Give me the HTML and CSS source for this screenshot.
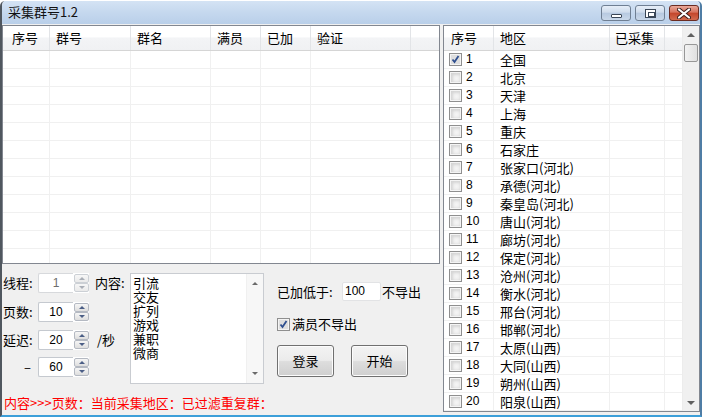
FILE: index.html
```html
<!DOCTYPE html>
<html>
<head>
<meta charset="utf-8">
<link rel="stylesheet" href="styles.css">
</head>
<body>
<div class="window">
  <div class="titlebar">
    <span class="title">采集群号1.2</span>
    <div class="caption-btns">
      <div class="cbtn min"><span class="min-ico"></span></div>
      <div class="cbtn max"><span class="max-ico"></span></div>
      <div class="cbtn close">
        <svg width="14" height="11" viewBox="0 0 14 11"><path d="M2 1.5 L12 9.5 M12 1.5 L2 9.5" stroke="#3b1d1a" stroke-width="4" stroke-linecap="round"/><path d="M2 1.5 L12 9.5 M12 1.5 L2 9.5" stroke="#ffffff" stroke-width="2.2" stroke-linecap="round"/></svg>
      </div>
    </div>
  </div>
  <div class="client">
    <div class="left">
      <div class="ltable">
        <div class="lrow lhead">
          <div class="c1">序号</div><div class="c2">群号</div><div class="c3">群名</div><div class="c4">满员</div><div class="c5">已加</div><div class="c6">验证</div><div class="c7"></div>
        </div>
        <div class="lrow"><div class="c1"></div><div class="c2"></div><div class="c3"></div><div class="c4"></div><div class="c5"></div><div class="c6"></div><div class="c7"></div></div>
        <div class="lrow"><div class="c1"></div><div class="c2"></div><div class="c3"></div><div class="c4"></div><div class="c5"></div><div class="c6"></div><div class="c7"></div></div>
        <div class="lrow"><div class="c1"></div><div class="c2"></div><div class="c3"></div><div class="c4"></div><div class="c5"></div><div class="c6"></div><div class="c7"></div></div>
        <div class="lrow"><div class="c1"></div><div class="c2"></div><div class="c3"></div><div class="c4"></div><div class="c5"></div><div class="c6"></div><div class="c7"></div></div>
        <div class="lrow"><div class="c1"></div><div class="c2"></div><div class="c3"></div><div class="c4"></div><div class="c5"></div><div class="c6"></div><div class="c7"></div></div>
        <div class="lrow"><div class="c1"></div><div class="c2"></div><div class="c3"></div><div class="c4"></div><div class="c5"></div><div class="c6"></div><div class="c7"></div></div>
        <div class="lrow"><div class="c1"></div><div class="c2"></div><div class="c3"></div><div class="c4"></div><div class="c5"></div><div class="c6"></div><div class="c7"></div></div>
        <div class="lrow"><div class="c1"></div><div class="c2"></div><div class="c3"></div><div class="c4"></div><div class="c5"></div><div class="c6"></div><div class="c7"></div></div>
        <div class="lrow"><div class="c1"></div><div class="c2"></div><div class="c3"></div><div class="c4"></div><div class="c5"></div><div class="c6"></div><div class="c7"></div></div>
        <div class="lrow"><div class="c1"></div><div class="c2"></div><div class="c3"></div><div class="c4"></div><div class="c5"></div><div class="c6"></div><div class="c7"></div></div>
        <div class="lrow"><div class="c1"></div><div class="c2"></div><div class="c3"></div><div class="c4"></div><div class="c5"></div><div class="c6"></div><div class="c7"></div></div>
        <div class="lrow"><div class="c1"></div><div class="c2"></div><div class="c3"></div><div class="c4"></div><div class="c5"></div><div class="c6"></div><div class="c7"></div></div>
      </div>

      <div class="bottom">
        <div class="controls">
          <div class="form-grid">
            <div class="lbl r1">线程:</div>
            <div class="spin disabled r1 s">
              <div class="spin-input">1</div>
              <div class="spin-btns"><div class="sb"><span class="up"></span></div><div class="sb"><span class="dn"></span></div></div>
            </div>
            <div class="lbl content-lbl r1">内容:</div>
            <div class="memo">
              <div class="memo-text"><div>引流</div><div>交友</div><div>扩列</div><div>游戏</div><div>兼职</div><div>微商</div></div>
              <div class="memo-scroll"><span class="up"></span><span class="dn"></span></div>
            </div>

            <div class="lbl r2">页数:</div>
            <div class="spin r2 s">
              <div class="spin-input">10</div>
              <div class="spin-btns"><div class="sb"><span class="up"></span></div><div class="sb"><span class="dn"></span></div></div>
            </div>

            <div class="lbl r3">延迟:</div>
            <div class="spin r3 s">
              <div class="spin-input">20</div>
              <div class="spin-btns"><div class="sb"><span class="up"></span></div><div class="sb"><span class="dn"></span></div></div>
            </div>
            <div class="lbl per r3">/秒</div>

            <div class="lbl dash r4">–</div>
            <div class="spin r4 s">
              <div class="spin-input">60</div>
              <div class="spin-btns"><div class="sb"><span class="up"></span></div><div class="sb"><span class="dn"></span></div></div>
            </div>
          </div>

          <div class="opts">
            <div class="opt-row">
              <span class="lbl low-lbl">已加低于:</span>
              <div class="num-input">100</div>
              <span class="lbl">不导出</span>
            </div>
            <div class="opt-row check-row">
              <svg class="cb" width="13" height="13" viewBox="0 0 13 13"><rect x="0.5" y="0.5" width="12" height="12" fill="#f4f4f4" stroke="#8f8f8f"/><rect x="2" y="2" width="9" height="9" fill="#dedede"/><path d="M3.5 6.5 L5.5 9 L9.5 3" stroke="#2f4f8f" stroke-width="1.8" fill="none"/></svg>
              <span class="lbl">满员不导出</span>
            </div>
            <div class="opt-row btn-row">
              <div class="btn">登录</div>
              <div class="btn">开始</div>
            </div>
          </div>
        </div>
        <div class="status">内容&gt;&gt;&gt;页数：当前采集地区：已过滤重复群：</div>
      </div>
    </div>

    <div class="right">
      <div class="rtable">
        <div class="rrow rhead"><div class="d1">序号</div><div class="d2">地区</div><div class="d3">已采集</div><div class="d4"></div></div>
        <div class="rrow"><div class="d1"><svg class="cb" width="13" height="13" viewBox="0 0 13 13"><rect x="0.5" y="0.5" width="12" height="12" fill="#f4f4f4" stroke="#8f8f8f"/><rect x="2" y="2" width="9" height="9" fill="#dedede"/><path d="M3.5 6.5 L5.5 9 L9.5 3" stroke="#2f4f8f" stroke-width="1.8" fill="none"/></svg><span class="num">1</span></div><div class="d2">全国</div><div class="d3"></div><div class="d4"></div></div>
        <div class="rrow"><div class="d1"><span class="box"></span><span class="num">2</span></div><div class="d2">北京</div><div class="d3"></div><div class="d4"></div></div>
        <div class="rrow"><div class="d1"><span class="box"></span><span class="num">3</span></div><div class="d2">天津</div><div class="d3"></div><div class="d4"></div></div>
        <div class="rrow"><div class="d1"><span class="box"></span><span class="num">4</span></div><div class="d2">上海</div><div class="d3"></div><div class="d4"></div></div>
        <div class="rrow"><div class="d1"><span class="box"></span><span class="num">5</span></div><div class="d2">重庆</div><div class="d3"></div><div class="d4"></div></div>
        <div class="rrow"><div class="d1"><span class="box"></span><span class="num">6</span></div><div class="d2">石家庄</div><div class="d3"></div><div class="d4"></div></div>
        <div class="rrow"><div class="d1"><span class="box"></span><span class="num">7</span></div><div class="d2">张家口(河北)</div><div class="d3"></div><div class="d4"></div></div>
        <div class="rrow"><div class="d1"><span class="box"></span><span class="num">8</span></div><div class="d2">承德(河北)</div><div class="d3"></div><div class="d4"></div></div>
        <div class="rrow"><div class="d1"><span class="box"></span><span class="num">9</span></div><div class="d2">秦皇岛(河北)</div><div class="d3"></div><div class="d4"></div></div>
        <div class="rrow"><div class="d1"><span class="box"></span><span class="num">10</span></div><div class="d2">唐山(河北)</div><div class="d3"></div><div class="d4"></div></div>
        <div class="rrow"><div class="d1"><span class="box"></span><span class="num">11</span></div><div class="d2">廊坊(河北)</div><div class="d3"></div><div class="d4"></div></div>
        <div class="rrow"><div class="d1"><span class="box"></span><span class="num">12</span></div><div class="d2">保定(河北)</div><div class="d3"></div><div class="d4"></div></div>
        <div class="rrow"><div class="d1"><span class="box"></span><span class="num">13</span></div><div class="d2">沧州(河北)</div><div class="d3"></div><div class="d4"></div></div>
        <div class="rrow"><div class="d1"><span class="box"></span><span class="num">14</span></div><div class="d2">衡水(河北)</div><div class="d3"></div><div class="d4"></div></div>
        <div class="rrow"><div class="d1"><span class="box"></span><span class="num">15</span></div><div class="d2">邢台(河北)</div><div class="d3"></div><div class="d4"></div></div>
        <div class="rrow"><div class="d1"><span class="box"></span><span class="num">16</span></div><div class="d2">邯郸(河北)</div><div class="d3"></div><div class="d4"></div></div>
        <div class="rrow"><div class="d1"><span class="box"></span><span class="num">17</span></div><div class="d2">太原(山西)</div><div class="d3"></div><div class="d4"></div></div>
        <div class="rrow"><div class="d1"><span class="box"></span><span class="num">18</span></div><div class="d2">大同(山西)</div><div class="d3"></div><div class="d4"></div></div>
        <div class="rrow"><div class="d1"><span class="box"></span><span class="num">19</span></div><div class="d2">朔州(山西)</div><div class="d3"></div><div class="d4"></div></div>
        <div class="rrow"><div class="d1"><span class="box"></span><span class="num">20</span></div><div class="d2">阳泉(山西)</div><div class="d3"></div><div class="d4"></div></div>
      </div>
      <div class="vscroll">
        <div class="arrow"><span class="up"></span></div>
        <div class="thumb"></div>
        <div class="track"></div>
        <div class="arrow"><span class="dn"></span></div>
      </div>
    </div>
  </div>
</div>
</body>
</html>
```

FILE: styles.css
```css
* { box-sizing: border-box; }
html, body { margin: 0; padding: 0; background: #ffffff; }
body {
  width: 704px; height: 418px; overflow: hidden;
  padding-top: 1px;
  font-family: "Noto Sans CJK SC", "Noto Sans", sans-serif;
  font-size: 13px; color: #000;
}
.window {
  width: 702px; height: 416px;
  border-left: 2px solid #50575f;
  border-right: 2px solid #4f7da5;
  border-bottom: 2px solid #3c9fd9;
  border-radius: 5px 5px 0 0;
  background: #f0f0f0;
  display: flex; flex-direction: column;
  overflow: hidden;
}
.titlebar {
  height: 23px; flex: none;
  background: linear-gradient(#d4e3f4 0%, #c5d8ee 50%, #b9cfe9 100%);
  display: flex; align-items: flex-start; justify-content: space-between;
}
.title { padding-left: 6px; line-height: 22px; font-size: 13px; color: #111; }
.caption-btns { display: flex; gap: 4px; padding-top: 4px; padding-right: 1px; }
.cbtn {
  width: 30px; height: 16px; border: 1px solid #6f7f93; border-radius: 3px;
  display: flex; align-items: center; justify-content: center;
  background: linear-gradient(#e6eef8 0%, #cfdcec 45%, #b7c9e0 50%, #c9d8ea 100%);
}
.cbtn.close {
  border-color: #6b2c22;
  background: linear-gradient(#e9a99a 0%, #d7725d 45%, #c4452b 50%, #d26b4f 100%);
}
.min-ico { width: 11px; height: 4px; margin-top: 5px; background: #fff; border: 1px solid #3a4656; border-radius: 1px; }
.max-ico { width: 11px; height: 9px; border: 1px solid #3a4656; background: #fff; }
.max-ico::after { content: ""; display: block; margin: 2px; width: 5px; height: 3px; border: 1px solid #3a4656; }

.client { flex: 1; display: flex; gap: 3px; padding-top: 1px; }
.left { width: 438px; display: flex; flex-direction: column; }

.ltable {
  height: 239px; border: 1px solid #828790; background: #fff; overflow: hidden;
}
.lrow { display: flex; height: 18px; border-bottom: 1px solid #f0f0f0; }
.lrow > div { border-right: 1px solid #f0f0f0; height: 100%; }
.lrow.lhead {
  height: 25px; border-bottom: 1px solid #d5d5d5;
  background: linear-gradient(#ffffff 0%, #ffffff 45%, #f3f4f6 50%, #f0f1f3 100%);
}
.lhead > div { border-right: 1px solid #e2e4e7; padding-left: 6px; line-height: 24px; }
.lrow .c1 { width: 47px; }
.lrow .c2 { width: 81px; }
.lrow .c3 { width: 80px; }
.lrow .c4 { width: 50px; }
.lrow .c5 { width: 50px; }
.lrow .c6 { width: 100px; }
.lrow .c7 { width: 28px; border-right: none; }
.lhead .c1 { padding-left: 9px; }

.bottom { flex: 1; display: flex; flex-direction: column; }
.controls { display: flex; padding-top: 9px; height: 130px; }
.form-grid {
  display: grid;
  grid-template-columns: 36px 51px 41px 134px;
  grid-template-rows: 29px 28px 27px 20px;
  align-items: start;
}
.lbl { font-size: 13px; line-height: 20px; white-space: nowrap; }
.r1 { grid-row: 1; }
.r2 { grid-row: 2; }
.r3 { grid-row: 3; }
.r4 { grid-row: 4; }
.form-grid .lbl { grid-column: 1; padding-left: 1px; }
.form-grid .s { grid-column: 2; }
.form-grid .content-lbl { grid-column: 3; padding-left: 6px; }
.form-grid .per { grid-column: 3; padding-left: 8px; }
.form-grid .dash { padding-left: 22px; }
.spin { display: flex; height: 20px; }
.spin-input {
  width: 35px; height: 20px; background: #fff;
  border: 1px solid #c5c9cf; border-right: none; border-radius: 2px 0 0 2px;
  font-family: "Liberation Sans", sans-serif; font-size: 12px; line-height: 18px;
  text-align: center;
}
.spin-btns { width: 16px; height: 20px; display: flex; flex-direction: column; background: #fff; padding: 1px 0 1px 1px; }
.sb {
  flex: 1; border: 1px solid #b4b9c2; border-radius: 2px;
  background: linear-gradient(#f6f6f6, #dedede);
  display: flex; align-items: center; justify-content: center;
}
.up { width: 0; height: 0; border-left: 3px solid transparent; border-right: 3px solid transparent; border-bottom: 3px solid #4b5e86; }
.dn { width: 0; height: 0; border-left: 3px solid transparent; border-right: 3px solid transparent; border-top: 3px solid #4b5e86; }
.disabled .spin-input { color: #6d6d6d; border-color: #d7d9dc; }
.disabled .sb { border-color: #ccd0d5; background: linear-gradient(#f7f7f7, #eaeaea); }
.disabled .up { border-bottom-color: #a9aeb6; }
.disabled .dn { border-top-color: #a9aeb6; }

.memo {
  grid-column: 4; grid-row: 1 / 5;
  height: 111px; width: 134px;
  background: #fff; border: 1px solid #c9ccd1;
  display: flex;
}
.memo-text { flex: 1; padding: 2px 0 0 2px; font-size: 13px; line-height: 14px; }
.memo-text > div { height: 14px; }
.memo-scroll {
  width: 17px; background: #f7f7f7; border-left: 1px solid #f0f0f0;
  display: flex; flex-direction: column; justify-content: space-between; align-items: center;
  padding: 8px 0 8px;
}
.memo-scroll .up { border-bottom-color: #6a6a6a; }
.memo-scroll .dn { border-top-color: #6a6a6a; }

.opts { margin-left: 13px; display: flex; flex-direction: column; }
.opt-row { display: flex; align-items: center; }
.opt-row:first-child { margin-top: 9px; height: 19px; }
.low-lbl { width: 64px; }
.num-input {
  width: 39px; height: 19px; background: #fff; border: 1px solid #e2e3e5; border-radius: 2px;
  margin-left: 1px; margin-right: 1px;
  font-family: "Liberation Sans", sans-serif; font-size: 12px; line-height: 17px; padding-left: 2px;
}
.check-row { margin-top: 16px; height: 14px; gap: 2px; }
.btn-row { margin-top: 14px; gap: 17px; }
.btn {
  width: 57px; height: 32px; border: 1px solid #707070; border-radius: 3px;
  background: linear-gradient(#f3f3f3 0%, #ebebeb 48%, #dddddd 52%, #cfcfcf 100%);
  box-shadow: inset 0 0 0 1px #fcfcfc;
  text-align: center; line-height: 30px; font-size: 13px;
}

.status { color: #ff0000; font-size: 13px; line-height: 16px; padding-left: 2px; margin-top: 1px; }

.right { width: 257px; height: 387px; border: 1px solid #828790; background: #fff; display: flex; }
.rtable { flex: 1; }
.rrow { display: flex; height: 18px; border-bottom: 1px solid #f0f0f0; }
.rrow > div { border-right: 1px solid #f0f0f0; height: 100%; }
.rrow.rhead {
  height: 25px; border-bottom: 1px solid #d5d5d5;
  background: linear-gradient(#ffffff 0%, #ffffff 45%, #f3f4f6 50%, #f0f1f3 100%);
}
.rhead > div { border-right: 1px solid #e2e4e7; line-height: 24px; }
.rrow .d1 { width: 50px; display: flex; align-items: center; padding-left: 5px; }
.rrow .d2 { width: 116px; padding-left: 6px; line-height: 17px; }
.rrow .d3 { width: 55px; padding-left: 5px; }
.rrow .d4 { width: 17px; border-right: none; }
.rhead .d1 { padding-left: 7px; }
.rhead .d2 { line-height: 24px; }
.cb { flex: none; display: block; }
.box {
  width: 13px; height: 13px; flex: none; border: 1px solid #8f8f8f;
  background: #f4f4f4; box-shadow: inset 0 0 0 1px #f4f4f4, inset 1px 1px 3px 2px #d4d4d4;
}
.num { font-family: "Liberation Sans", sans-serif; font-size: 12px; margin-left: 4px; line-height: 17px; }

.vscroll { width: 18px; display: flex; flex-direction: column; background: #f0f0f0; border-left: 1px solid #ececec; }
.vscroll .arrow { height: 17px; display: flex; align-items: center; justify-content: center; }
.vscroll .arrow .up { border-bottom-color: #606060; border-left-width: 4px; border-right-width: 4px; border-bottom-width: 4px; }
.vscroll .arrow .dn { border-top-color: #606060; border-left-width: 4px; border-right-width: 4px; border-top-width: 4px; }
.vscroll .thumb {
  height: 18px; margin: 1px 1px; border: 1px solid #979797; border-radius: 2px;
  background: linear-gradient(90deg, #f2f2f2, #e0e0e0);
}
.vscroll .track { flex: 1; }
```
